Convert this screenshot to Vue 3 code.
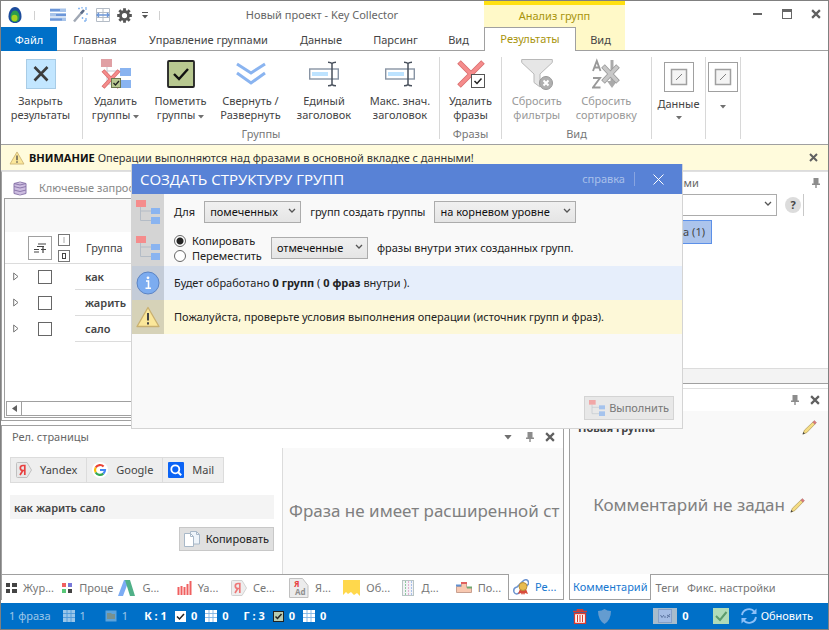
<template>
  <div class="window">
    <svg class="sprite" aria-hidden="true">
      <symbol id="pin" viewBox="0 0 8 10">
        <path d="M1.5 0h5v5.5H8V7H4.7v3H3.3V7H0V5.5h1.5z" fill="#8c8c8c" />
      </symbol>
      <symbol id="cross" viewBox="0 0 9 9">
        <path d="M1 1l7 7M8 1L1 8" stroke="#606060" stroke-width="2" />
      </symbol>
      <symbol id="caret" viewBox="0 0 6 4">
        <path d="M0 0h6L3 3.5z" fill="#707070" />
      </symbol>
      <symbol id="chevron" viewBox="0 0 8 6">
        <path d="M1 1l3 3 3-3" fill="none" stroke="#555" stroke-width="1.3" />
      </symbol>
      <symbol id="tree" viewBox="0 0 24 24">
        <path d="M4.500 7v13.500H15M4.500 11H15" fill="none" stroke="#b4bcc6" />
        <rect width="10" height="7" fill="#f58c8c" />
        <rect x="15" y="8" width="9" height="6" fill="#8ab4f0" />
        <rect x="15" y="17" width="9" height="7" fill="#8ab4f0" />
      </symbol>
      <symbol id="pencil" viewBox="0 0 16 16">
        <path d="M1 15l1.500-4L11.800 2l2.200 2.200L5 13.500z" fill="#f5dc82" stroke="#b09c60" stroke-width=".8" />
        <path d="M11.500 2.300L13.200.6l2.200 2.200L13.700 4.500z" fill="#e07878" stroke="#a87878" stroke-width=".6" />
        <path d="M.6 15.400l.9-2.600 1.700 1.700z" fill="#444" />
      </symbol>
      <symbol id="cells" viewBox="0 0 12 12">
        <rect width="12" height="12" fill="#fff" />
        <path d="M4 0v12M8 0v12M0 3.500h12M0 7.500h12" stroke="#7fb4e4" stroke-width=".9" />
      </symbol>
      <symbol id="warning" viewBox="0 0 24 22">
        <path d="M12 1.500L23 20.500H1z" fill="#fbe79a" stroke="#c9b070" stroke-width="1.300" stroke-linejoin="round" />
        <path d="M12 7v7.500M12 16.300v2.200" stroke="#444" stroke-width="2" />
      </symbol>
      <symbol id="rename" viewBox="0 0 30 26">
        <rect x=".7" y="8" width="28.600" height="10" fill="#fff" stroke="#8894a4" stroke-width="1.400" />
        <rect x="3" y="11" width="16" height="4" fill="#bde3ff" />
        <path d="M23 2v22M19 1.200q3 0 4 1.300q1-1.300 4-1.300M19 24.800q3 0 4-1.300q1 1.300 4 1.300" fill="none" stroke="#48505c" stroke-width="1.500" />
      </symbol>
      <symbol id="slot" viewBox="0 0 30 30">
        <rect x=".5" y=".5" width="29" height="29" fill="#fff" stroke="#a0a0a0" />
        <rect x="7.500" y="7.500" width="15" height="15" fill="#f4f4f4" stroke="#a0a0a0" stroke-width="1.500" />
        <path d="M12 18l6-6" stroke="#808080" />
      </symbol>
      <symbol id="yandex" viewBox="0 0 16 16">
        <path d="M1.500.5h9.500l4.500 7.500-4.500 7.500H1.500a1 1 0 0 1-1-1v-13a1 1 0 0 1 1-1z" fill="#e8e8e8" stroke="#c0c0c0" />
        <path d="M8.800 13V3.500H7Q4.300 3.500 4.300 6T7 8.500h1.500M6.800 8.500L4 13" fill="none" stroke="#e84040" stroke-width="1.700" />
      </symbol>
    </svg>

    <header class="top">
      <div class="title-bar">
        <div class="quick">
          <svg width="14" height="16" viewBox="0 0 14 16">
            <path d="M7 0c4 0 6.500 5 6.500 9.500C13.500 13.500 11 16 7 16S.5 13.500.5 9.500C.5 5 3 0 7 0z" fill="#1c4c9c" />
            <path d="M7 3.500c3 0 4.500 3.500 4.500 6.500s-2 5-4.500 5-4.500-2-4.500-5S4 3.500 7 3.500z" fill="#2c9c4c" />
            <ellipse cx="6.500" cy="11" rx="3" ry="3.300" fill="#a8d020" />
          </svg>
          <i class="tick first"></i>
          <svg width="16" height="14" viewBox="0 0 16 14">
            <path d="M0 .5h16v3.500H0zM0 5h16v3.500H0zM0 9.500h16V13H0z" fill="#a8c4ea" />
            <path d="M0 1h10v2H0zM6 6h10v2H6zM0 10.500h12v2H0z" fill="#6c96d8" />
          </svg>
          <svg width="16" height="16" viewBox="0 0 16 16">
            <path d="M1 14.500L10 4" stroke="#a0a8b4" stroke-width="2.400" />
            <path d="M8 6.500L11 3" stroke="#5c6c88" stroke-width="2.600" />
            <path d="M13 0v3M5 1.500h2M14 6v2M13 11v3M9.500 10v2M11 14h2M9 0v1.500" stroke="#8ab8f0" stroke-width="1.400" />
          </svg>
          <svg width="14" height="14" viewBox="0 0 14 14">
            <path d="M.5.5h13v13H.5zM7 .5v13M.5 4.500h13M.5 9.500h13" fill="#fff" stroke="#b4bcc6" />
            <path d="M1 7h12M3 5L1 7l2 2M11 5l2 2-2 2" fill="none" stroke="#6c96d8" stroke-width="1.300" />
          </svg>
          <svg width="15" height="15" viewBox="-8 -8 16 16">
            <path d="M0-7.800V7.800M-7.800 0H7.800M-5.500-5.500L5.500 5.500M5.500-5.500L-5.500 5.500" stroke="#555" stroke-width="3" />
            <circle r="4.300" fill="#fff" stroke="#555" stroke-width="3" />
          </svg>
          <svg class="more" width="6" height="7" viewBox="0 0 6 7"><path d="M0 .5h6" stroke="#555" /><path d="M0 3h6L3 6.500z" fill="#555" /></svg>
          <i class="tick"></i>
        </div>
        <div class="title">Новый проект - Key Collector</div>
      </div>
      <div class="context-title">Анализ групп</div>
      <div class="controls">
        <button aria-label="Свернуть"><svg width="10" height="10"><path d="M0 5h9" stroke="#666" stroke-width="2" /></svg></button>
        <button aria-label="Развернуть"><svg width="10" height="10"><rect x=".5" y=".5" width="9" height="9" fill="none" stroke="#666" /><path d="M0 1.500h10" stroke="#666" stroke-width="3" /></svg></button>
        <button aria-label="Закрыть"><svg width="10" height="10" viewBox="0 0 9 9"><use href="#cross" /></svg></button>
      </div>
      <nav class="tabs">
        <button class="file">Файл</button>
        <button v-for="t in tabs" :key="t">{{ t }}</button>
      </nav>
      <nav class="context-tabs">
        <button class="active">Результаты</button>
        <button>Вид</button>
      </nav>
      <div class="tabs-rest"></div>
    </header>

    <section class="ribbon">
      <div class="group g-close">
        <div class="actions">
          <button>
            <svg width="30" height="30" viewBox="0 0 30 30">
              <rect x=".5" y=".5" width="29" height="29" fill="#c2e6ff" stroke="#a8cce6" />
              <path d="M8.500 8l13 13.500M21.500 8l-13 13.500" stroke="#3c3c3c" stroke-width="2.600" />
            </svg>
            <span>Закрыть<br />результаты</span>
          </button>
        </div>
      </div>
      <div class="group g-groups">
        <div class="actions">
          <button>
            <svg width="30" height="30" viewBox="0 0 30 30">
              <path d="M6 8v17h13M6 12h13" fill="none" stroke="#c4c8d0" />
              <rect width="11" height="8" fill="#e0a0a4" />
              <rect x="19" y="9" width="11" height="8" fill="#8ab4f0" />
              <rect x="19" y="21" width="11" height="8" fill="#8ab4f0" />
              <path d="M2 11.500l16 17M18 11.500L2 28.500" stroke="#d86c6c" stroke-width="4" />
              <path d="M2.500 12l15 16M17.500 12L2.500 28" stroke="#f58c8c" stroke-width="2.500" />
              <rect x="10.500" y="19.500" width="9" height="9" fill="#b8c890" stroke="#6c7850" />
              <path d="M12.500 24l2 2 3.500-4" fill="none" stroke="#222" stroke-width="1.300" />
            </svg>
            <span>Удалить<br />группы <svg width="6" height="4"><use href="#caret" /></svg></span>
          </button>
          <button>
            <svg width="28" height="28" viewBox="0 0 28 28">
              <rect x="1" y="1" width="26" height="26" rx="1" fill="#b8c890" stroke="#222" stroke-width="1.800" />
              <path d="M7 14l5 5 9-10" fill="none" stroke="#111" stroke-width="2.400" />
            </svg>
            <span>Пометить<br />группы <svg width="6" height="4"><use href="#caret" /></svg></span>
          </button>
          <button>
            <svg width="30" height="24" viewBox="0 0 30 24">
              <path d="M1 2l14 9 14-9M1 11l14 10 14-10" fill="none" stroke="#8ab4f0" stroke-width="3" />
            </svg>
            <span>Свернуть /<br />Развернуть</span>
          </button>
          <button>
            <svg width="30" height="26"><use href="#rename" /></svg>
            <span>Единый<br />заголовок</span>
          </button>
          <button>
            <svg width="30" height="26"><use href="#rename" /></svg>
            <span>Макс. знач.<br />заголовок</span>
          </button>
        </div>
        <div class="caption">Группы</div>
      </div>
      <div class="group g-phrases">
        <div class="actions">
          <button>
            <svg width="28" height="28" viewBox="0 0 28 28">
              <path d="M2 2l24 24M26 2L2 26" stroke="#d86c6c" stroke-width="5" />
              <path d="M2.500 2.500l23 23M25.500 2.500l-23 23" stroke="#f58c8c" stroke-width="3.400" />
              <rect x="14.500" y="14.500" width="13" height="13" fill="#fff" stroke="#555" />
              <path d="M17.500 21l2.500 2.500 4.500-5" fill="none" stroke="#222" stroke-width="1.500" />
            </svg>
            <span>Удалить<br />фразы</span>
          </button>
        </div>
        <div class="caption">Фразы</div>
      </div>
      <div class="group g-view">
        <div class="actions">
          <button disabled>
            <svg width="32" height="32" viewBox="0 0 32 32">
              <path d="M.7 1.500h30.600v3L19 16v13l-6-4.500V16L.7 4.500z" fill="#e6e6e6" stroke="#b8b8b8" />
              <circle cx="25" cy="25" r="6.500" fill="#b0b0b0" stroke="#999" />
              <path d="M22.500 22.500l5 5M27.500 22.500l-5 5" stroke="#fff" stroke-width="2" />
            </svg>
            <span>Сбросить<br />фильтры</span>
          </button>
          <button disabled>
            <svg width="28" height="30" viewBox="0 0 28 30">
              <path d="M1 12L4.800 2 8.500 12M2.500 8.500h4.800M1 19h7L1 28.500h7.500" fill="none" stroke="#999" stroke-width="1.900" />
              <path d="M20 1v22" stroke="#aaa" stroke-width="3" /><path d="M15 22h10l-5 7z" fill="#aaa" />
              <path d="M11 7l15 16M26 7L11 23" stroke="#999" stroke-width="5" />
              <path d="M11.500 7.500l14 15M25.500 7.500l-14 15" stroke="#c8c8c8" stroke-width="3.400" />
            </svg>
            <span>Сбросить<br />сортировку</span>
          </button>
        </div>
        <div class="caption">Вид</div>
      </div>
      <div class="group g-data">
        <button>
          <svg width="30" height="30"><use href="#slot" /></svg>
          <span>Данные</span>
          <svg width="6" height="4"><use href="#caret" /></svg>
        </button>
      </div>
      <div class="group g-last">
        <button aria-label="Ещё">
          <svg width="30" height="30"><use href="#slot" /></svg>
          <svg width="6" height="4"><use href="#caret" /></svg>
        </button>
      </div>
    </section>

    <div class="notice">
      <svg width="16" height="14" viewBox="0 0 24 22"><use href="#warning" /></svg>
      <span class="notice-text"><b>ВНИМАНИЕ</b> Операции выполняются над фразами в основной вкладке с данными!</span>
      <button aria-label="Закрыть"><svg width="9" height="9"><use href="#cross" /></svg></button>
    </div>

    <main class="docks">
      <div class="column">
        <section class="panel keywords">
          <div class="doc-title">
            <svg width="14" height="15" viewBox="0 0 14 15">
              <rect x="1" y="2" width="12" height="11" fill="#cdbde0" />
              <path d="M1 2.500q6-3 12 0q-6 3-12 0M1 5.500q6 3 12 0M1 9q6 3 12 0M1 12.500q6 3 12 0M1 2.500v10M13 2.500v10" fill="none" stroke="#8c78ac" />
            </svg>
            Ключевые запросы
          </div>
          <div class="grid-box">
            <div class="group-area"></div>
            <table>
              <thead>
                <tr>
                  <th colspan="3">
                    <div class="head-cell">
                      <button class="sort" aria-label="Сортировка">
                        <svg width="12" height="10" viewBox="0 0 12 10"><path d="M4 1h8M3 3.500h7M0 6.500h5M0 9h5M7 6.500h5M9 4v6" stroke="#444" stroke-width="1.200" /></svg>
                      </button>
                      <span class="marks">
                        <svg width="12" height="12"><rect x=".5" y=".5" width="11" height="11" fill="#fff" stroke="#777" /><path d="M6 3v6" stroke="#aaa" /></svg>
                        <svg width="12" height="12"><rect x=".5" y=".5" width="11" height="11" fill="#fff" stroke="#777" /><rect x="4.500" y="3.500" width="3" height="5" fill="none" stroke="#444" /></svg>
                      </span>
                      Группа
                    </div>
                  </th>
                </tr>
              </thead>
              <tbody>
                <tr v-for="word in words" :key="word">
                  <td class="expand"><svg width="6" height="9" viewBox="0 0 6 9"><path d="M.7 1l4.300 3.500L.7 8z" fill="#fff" stroke="#777" /></svg></td>
                  <td class="check"><input type="checkbox" :aria-label="word" /></td>
                  <td class="word">{{ word }}</td>
                </tr>
              </tbody>
            </table>
            <div class="scroll">
              <button aria-label="Влево"><svg width="5" height="7"><path d="M5 0v7L0 3.500z" fill="#606060" /></svg></button>
              <div class="track"></div>
            </div>
          </div>
        </section>

        <section class="panel pages">
          <div class="panel-head">
            <h2>Рел. страницы</h2>
            <svg class="drop" width="8" height="5" viewBox="0 0 6 4"><use href="#caret" /></svg>
            <svg width="8" height="10"><use href="#pin" /></svg>
            <button aria-label="Закрыть"><svg width="10" height="10" viewBox="0 0 9 9"><use href="#cross" /></svg></button>
          </div>
          <div class="pages-body">
            <div class="query">
              <div class="engines">
                <button><svg width="16" height="16"><use href="#yandex" /></svg>Yandex</button>
                <button>
                  <svg width="16" height="16" viewBox="0 0 16 16">
                    <circle cx="8" cy="8" r="8" fill="#fff" />
                    <g fill="none" stroke-width="2.200">
                      <path d="M3.700 5.500A5 5 0 0 1 11.600 4.500" stroke="#ea4335" />
                      <path d="M3.700 5.500A5 5 0 0 0 3.700 10.500" stroke="#fbbc05" />
                      <path d="M3.700 10.500A5 5 0 0 0 11.300 11.700" stroke="#34a853" />
                      <path d="M11.300 11.700A5 5 0 0 0 13 8H8" stroke="#4285f4" />
                    </g>
                  </svg>Google
                </button>
                <button>
                  <svg width="16" height="16" viewBox="0 0 16 16">
                    <rect width="16" height="16" rx="1" fill="#0b63f5" />
                    <circle cx="7.300" cy="7.300" r="4" fill="none" stroke="#fff" stroke-width="1.800" />
                    <path d="M10.200 10.200l3 3" stroke="#fff" stroke-width="2" />
                  </svg>Mail
                </button>
              </div>
              <input class="phrase" type="text" value="как жарить сало" aria-label="Фраза" readonly />
              <button class="copy">
                <svg width="16" height="16" viewBox="0 0 16 16">
                  <path d="M6.500.5h6l3 3v9.500h-9z" fill="#eef4fa" stroke="#a8b8c8" />
                  <path d="M.5 2.500h6l3 3v10h-9z" fill="#fff" stroke="#a8b8c8" />
                  <path d="M6.500 2.500v3h3M12.500.5v3h3" fill="none" stroke="#a8b8c8" />
                </svg>Копировать
              </button>
            </div>
            <div class="no-stats">Фраза не имеет расширенной ст</div>
          </div>
          <nav class="dock-tabs">
            <button>
              <svg width="11" height="10"><path d="M0 0h4v4H0zM6 0h5v4H6zM0 6h4v4H0zM6 6h5v4H6z" fill="#444" /></svg>Жур...
            </button>
            <button>
              <svg width="11" height="10"><path d="M0 0h4v4H0z" fill="#f06060" /><path d="M6 0h4v4H6z" fill="#7878d8" /><path d="M0 6h4v4H0z" fill="#58c878" /><path d="M6 6h4v4H6z" fill="#444" /></svg>Проце
            </button>
            <button>
              <svg width="18" height="16" viewBox="0 0 18 16"><path d="M6 0h5L5 16H0z" fill="#7cacf4" /><path d="M7 0h5l5 16h-5z" fill="#50b088" /></svg>G...
            </button>
            <button>
              <svg width="17" height="14"><path d="M3.500 6v8M6.500 5v9M9.500 6v8M12.500 3v11M15.500 0v14" stroke="#f06060" stroke-width="2" /></svg>Ya...
            </button>
            <button>
              <svg width="16" height="16" class="dim"><use href="#yandex" /></svg>Се...
            </button>
            <button>
              <svg width="22" height="20" viewBox="-2 0 22 20"><path d="M.5.500h13l5.500 7v12H.5z" fill="#ececec" stroke="#c0c0c0" /><text x="5" y="9" class="ad-r">Я</text><text x="6" y="17" class="ad-g">Ad</text></svg>Я...
            </button>
            <button>
              <svg width="17" height="16"><path d="M0 0h17v16l-3-3-3 2-3-3-3 2-2-2-3 3z" fill="#ffd84c" /></svg>Об...
            </button>
            <button>
              <svg width="16" height="16"><rect x="2.500" y=".5" width="11" height="15" fill="#f2f2f6" stroke="#b8c4c4" /><path d="M5.500 1v14" stroke="#90c8a0" stroke-dasharray="2 1" /><path d="M8.500 1v14" stroke="#e0b0d0" stroke-dasharray="2 1" /><path d="M11.500 1v14" stroke="#a8c0e8" stroke-dasharray="2 1" /></svg>Д...
            </button>
            <button>
              <svg width="16" height="11"><path d="M.5 4.500h5v-4h5v5h5v5H.5z" fill="#f8c8b0" stroke="#c8a090" /><path d="M0 3.500h5" stroke="#6090d0" stroke-width="2" /><path d="M5 1h6" stroke="#e06060" stroke-width="2" /><path d="M11 5.500h5" stroke="#70a870" stroke-width="2" /></svg>По...
            </button>
            <button class="active">
              <svg width="16" height="16" viewBox="0 0 16 16"><path d="M1 13Q0 9 4 8l5-5q4-4 6-1t-2 5L7 13q-4 4-6 0z" fill="none" stroke="#6c94d0" stroke-width="1.600" /><path d="M7 10l-2 5 3-1 1 2 1-2 1 2 1-2 3 1-2-5z" fill="#d84c3c" /><circle cx="10" cy="7.500" r="4" fill="#e8bc50" stroke="#b89038" /></svg>Ре...
            </button>
          </nav>
        </section>
      </div>

      <div class="column">
        <section class="panel groups">
          <div class="panel-head">
            <h2>Управление группами</h2>
            <svg width="8" height="10"><use href="#pin" /></svg>
          </div>
          <div class="search">
            <span class="picker wide">
              <select aria-label="Поиск групп"><option></option></select>
              <svg width="8" height="6"><use href="#chevron" /></svg>
            </span>
            <button class="help" aria-label="Помощь">?</button>
          </div>
          <div class="tree"><div class="node">Новая группа (1)</div></div>
          <div class="foot"></div>
        </section>

        <section class="panel comment">
          <div class="panel-head">
            <svg width="8" height="10"><use href="#pin" /></svg>
            <button aria-label="Закрыть"><svg width="10" height="10" viewBox="0 0 9 9"><use href="#cross" /></svg></button>
          </div>
          <div class="comment-body">
            <div class="comment-title"><b>Новая группа</b><svg width="15" height="15"><use href="#pencil" /></svg></div>
            <div class="comment-empty">Комментарий не задан <svg width="15" height="15"><use href="#pencil" /></svg></div>
          </div>
          <nav class="note-tabs">
            <button class="active">Комментарий</button>
            <button>Теги</button>
            <button>Фикс. настройки</button>
            <i></i>
          </nav>
        </section>
      </div>
    </main>

    <footer class="status">
      <span class="faded">1 фраза</span>
      <span class="faded s-one"><svg width="12" height="12"><use href="#cells" /></svg>1</span>
      <span class="faded s-two"><svg width="12" height="12"><rect x=".5" y=".5" width="11" height="11" fill="#fff" opacity=".6" /><path d="M2 3h4l1 1h3v5H2z" fill="#c8a868" /></svg>1</span>
      <b>К : 1</b>
      <span class="pair"><svg width="11" height="11"><rect width="11" height="11" fill="#fff" /><path d="M2 5.500l2.500 2.500L9 3" fill="none" stroke="#222" stroke-width="1.500" /></svg><b>0</b></span>
      <span class="pair"><svg width="12" height="12"><use href="#cells" /></svg><b>0</b></span>
      <b class="s-g">Г : 3</b>
      <span class="pair"><svg width="11" height="11"><rect x=".5" y=".5" width="10" height="10" fill="#b8ccb0" stroke="#222" /><path d="M2.500 5.500l2 2L8.500 3" fill="none" stroke="#222" stroke-width="1.500" /></svg><b>0</b></span>
      <span class="pair"><svg width="12" height="12"><use href="#cells" /></svg><b>0</b></span>
      <span class="spacer"></span>
      <svg width="14" height="15" viewBox="0 0 14 15"><path d="M0 2.500h14M4.500 2V.7h5V2" fill="none" stroke="#d83c30" stroke-width="1.500" /><path d="M1.500 4.500h11v9.800h-11z" fill="#fff" stroke="#d83c30" stroke-width="1.300" /><path d="M4.500 6v7M7 6v7M9.500 6v7" stroke="#d83c30" stroke-width="1.100" /></svg>
      <svg class="shield" width="13" height="15"><path d="M6.500 0Q9 2 13 2q0 9-6.500 13Q0 11 0 2q4 0 6.500-2z" fill="#649cd0" /></svg>
      <span class="badge"><svg width="24" height="16"><rect width="24" height="16" fill="#a8bccc" /><rect x="5.500" y="1.500" width="13" height="13" fill="#a4bce4" stroke="#6884b4" stroke-dasharray="1 1" /><path d="M7.500 7l1.500 2.500 2-2.500M11 9h2M14 10l3-4M14 7l3 2" fill="none" stroke="#5c74a0" /></svg><b>0</b></span>
      <svg class="ok" width="16" height="16"><rect width="16" height="16" fill="#b0dcb8" /><path d="M3 8l4 4 6.500-8" fill="none" stroke="#5c9c6c" stroke-width="2" /></svg>
      <button class="refresh">
        <svg width="16" height="16" viewBox="0 0 16 16"><path d="M1 7a7 7 0 0 1 12.500-3M15 9a7 7 0 0 1-12.500 3" fill="none" stroke="#8cc0f8" stroke-width="1.900" /><path d="M15.500.5V6H10zM.5 15.500V10H6z" fill="#8cc0f8" /></svg>
        Обновить
      </button>
    </footer>

    <div class="dialog" role="dialog" aria-labelledby="dialog-title">
      <div class="dialog-head">
        <h1 id="dialog-title">СОЗДАТЬ СТРУКТУРУ ГРУПП</h1>
        <a href="#">справка</a>
        <button aria-label="Закрыть"><svg width="11" height="11"><path d="M.5.5l10 10M10.500.5l-10 10" stroke="#fff" /></svg></button>
      </div>
      <div class="row">
        <div class="side"><svg width="24" height="24"><use href="#tree" /></svg></div>
        <label for="source">Для</label>
        <span class="picker small">
          <select id="source" v-model="source"><option>помеченных</option><option>всех</option></select>
          <svg width="8" height="6"><use href="#chevron" /></svg>
        </span>
        <label for="level">групп создать группы</label>
        <span class="picker level">
          <select id="level" v-model="level"><option>на корневом уровне</option><option>в текущей группе</option></select>
          <svg width="8" height="6"><use href="#chevron" /></svg>
        </span>
      </div>
      <div class="row">
        <div class="side"><svg width="24" height="24"><use href="#tree" /></svg></div>
        <div class="radios">
          <label><input v-model="mode" type="radio" value="copy" />Копировать</label>
          <label><input v-model="mode" type="radio" value="move" />Переместить</label>
        </div>
        <span class="picker small">
          <select id="phrases" v-model="phrases"><option>отмеченные</option><option>все</option></select>
          <svg width="8" height="6"><use href="#chevron" /></svg>
        </span>
        <label for="phrases">фразы внутри этих созданных групп.</label>
      </div>
      <div class="row info">
        <div class="side"><svg width="24" height="24" viewBox="0 0 24 24"><circle cx="12" cy="12" r="11" fill="#7cacf0" stroke="#5c84c4" /><path d="M10 10h2.500v7M9.500 17.300h5.500" fill="none" stroke="#fff" stroke-width="1.600" /><circle cx="12" cy="6.800" r="1.400" fill="#fff" /></svg></div>
        <p>Будет обработано <b>0 групп</b> ( <b>0 фраз</b> внутри ).</p>
      </div>
      <div class="row warn">
        <div class="side"><svg width="24" height="22"><use href="#warning" /></svg></div>
        <p>Пожалуйста, проверьте условия выполнения операции (источник групп и фраз).</p>
      </div>
      <div class="dialog-foot">
        <button disabled><svg width="16" height="16" viewBox="0 0 24 24"><use href="#tree" /></svg>Выполнить</button>
      </div>
    </div>
  </div>
</template>

<script setup>
import { ref } from 'vue';

const tabs = ['Главная', 'Управление группами', 'Данные', 'Парсинг', 'Вид'];
const words = ['как', 'жарить', 'сало'];

const source = ref('помеченных');
const level = ref('на корневом уровне');
const phrases = ref('отмеченные');
const mode = ref('copy');
</script>

<style>
body {
  margin: 0;
}
</style>

<style scoped>
.window {
  position: relative;
  display: flex;
  flex-direction: column;
  box-sizing: border-box;
  min-height: 100vh;
  border: 1px solid #808080;
  background: #fff;
  color: #444;
  font: 11px/16px "Noto Sans", "Open Sans", sans-serif;
}

.window * {
  box-sizing: border-box;
}

.sprite {
  position: absolute;
  width: 0;
  height: 0;
}

svg {
  flex: none;
}

button {
  display: inline-flex;
  align-items: center;
  padding: 0;
  border: 0;
  background: none;
  color: inherit;
  font: inherit;
  white-space: nowrap;
}

/* title bar and tabs */
.top {
  display: grid;
  grid-template-columns: 483px 141px minmax(0, 1fr);
  grid-template-rows: 26px 24px;
}

.title-bar,
.quick {
  display: flex;
  align-items: center;
}

.title-bar {
  padding-top: 2px;
}

.quick {
  gap: 7px;
  padding-left: 7px;
}

.tick {
  width: 1px;
  height: 9px;
  background: #d0d0d0;
}

.tick.first {
  margin: 0 8px 0 5px;
}

.more {
  margin: 0 4px 0 3px;
}

.title {
  flex: 1;
  color: #666;
  text-align: center;
}

.context-title {
  border-top: 4px solid #ffe010;
  background: #fff9c8;
  color: #a8940c;
  line-height: 22px;
  text-align: center;
}

.controls {
  display: flex;
  justify-content: flex-end;
  align-items: center;
  gap: 19px;
  padding-right: 7px;
}

.tabs,
.context-tabs {
  display: grid;
  grid-template-columns: 56px 76px 151px 74px 75px 51px;
}

.tabs button,
.context-tabs button {
  justify-content: center;
  padding-top: 2px;
  border-bottom: 1px solid #a0a0a0;
}

.tabs .file {
  border-color: #0070c8;
  background: #0070c8;
  color: #fff;
}

.context-tabs {
  grid-template-columns: 92px 49px;
  background: #fff9c8;
}

.context-tabs .active {
  padding: 0 0 1px;
  border: 1px solid #a0a0a0;
  border-bottom: 0;
  background: #fff;
  color: #a8940c;
}

.tabs-rest {
  border-bottom: 1px solid #a0a0a0;
}

/* ribbon */
.ribbon {
  display: flex;
  height: 94px;
  padding: 6px 0 5px;
  border-bottom: 1px solid #a0a0a0;
}

.group {
  display: flex;
  flex-direction: column;
  border-right: 1px solid #d8d8d8;
}

.actions {
  display: flex;
  flex: 1;
}

.actions button {
  flex-direction: column;
  flex: 1;
  line-height: 14px;
}

.actions button > svg {
  height: 34px;
}

.actions span {
  padding-top: 3px;
}

.actions button:disabled {
  color: #999;
}

.caption {
  color: #777;
  line-height: 10px;
  text-align: center;
}

.g-close {
  width: 82px;
}

.g-close .actions {
  padding-right: 2px;
}

.g-groups {
  width: 357px;
}

.g-groups .actions {
  display: grid;
  grid-template-columns: 65px 65px 75px 72px 80px;
}

.g-phrases {
  width: 62px;
}

.g-view {
  width: 150px;
}

.g-view .actions {
  padding-right: 10px;
}

.g-data,
.g-last {
  width: 54px;
  align-items: center;
}

.g-last {
  width: 35px;
}

.g-data button,
.g-last button {
  flex-direction: column;
  gap: 4px;
  padding-top: 5px;
}

.g-last button {
  gap: 13px;
}

/* warning strip */
.notice {
  display: flex;
  align-items: center;
  gap: 4px;
  height: 26px;
  padding: 0 10px 0 8px;
  border-bottom: 1px solid #dcdcdc;
  background: #fffbdc;
  color: #333;
}

.notice-text {
  flex: 1;
}

.notice b {
  color: #111;
}

/* docked panels */
.docks {
  display: grid;
  flex: 1;
  grid-template-columns: minmax(0, 1fr) 259px;
  gap: 5px;
}

.column {
  display: flex;
  flex-direction: column;
  gap: 4px;
  min-width: 0;
}

.panel {
  display: flex;
  flex-direction: column;
  min-width: 0;
  border: 1px solid #a0a0a0;
  border-top-color: #e0e0e0;
}

.panel-head {
  display: flex;
  align-items: center;
  justify-content: flex-end;
  gap: 11px;
  height: 22px;
  padding: 0 8px 0 10px;
}

.panel-head h2 {
  flex: 1;
  margin: 0;
  color: #666;
  font-size: 11px;
  font-weight: 400;
}

.drop {
  margin-right: 3px;
}

.keywords {
  flex: 1;
  padding: 0 2px 2px;
}

.doc-title {
  display: flex;
  align-items: center;
  gap: 12px;
  height: 26px;
  padding: 6px 9px 0;
  color: #888;
}

.grid-box {
  display: flex;
  flex: 1;
  flex-direction: column;
  border: 1px solid #a0a0a0;
}

.group-area {
  height: 33px;
  background: #f8f8f8;
}

table {
  border-collapse: collapse;
}

th {
  padding: 0;
  border-bottom: 1px solid #dcdcdc;
  font-weight: 400;
}

.head-cell {
  display: flex;
  align-items: center;
  height: 31px;
  padding-left: 23px;
}

.sort {
  justify-content: center;
  width: 24px;
  height: 24px;
  border: 1px solid #a0a0a0;
}

.marks {
  display: grid;
  gap: 4px;
  margin: 0 16px 0 6px;
}

.expand {
  width: 22px;
  padding: 0 0 0 8px;
}

.check {
  width: 48px;
  padding: 0 0 0 11px;
}

.check input {
  display: block;
  width: 14px;
  height: 14px;
  margin: 0;
  border: 1px solid #666;
  background: #fff;
  appearance: none;
}

.word {
  height: 26px;
  padding: 0 10px;
  border-bottom: 1px solid #dcdcdc;
  font-weight: 600;
}

.scroll {
  display: flex;
  height: 15px;
  margin: auto 1px 1px;
  border: 1px solid #a0a0a0;
}

.scroll button {
  justify-content: center;
  width: 15px;
  border-right: 1px solid #a0a0a0;
}

.track {
  flex: 1;
}

.pages {
  border-top-color: #a0a0a0;
  border-bottom: 0;
}

.pages-body {
  display: grid;
  grid-template-columns: 280px minmax(0, 1fr);
  height: 126px;
}

.query {
  display: flex;
  flex-direction: column;
  padding: 9px 8px 0;
}

.engines {
  display: flex;
  align-self: flex-start;
  border: 1px solid #dcdcdc;
  background: #eeeeee;
}

.engines button {
  gap: 8px;
  height: 24px;
  padding: 0 9px 0 5px;
}

.engines button + button {
  border-left: 1px solid #dcdcdc;
}

.phrase {
  width: 100%;
  height: 24px;
  margin: 12px 0 8px;
  padding: 0 4px;
  border: 0;
  background: #f4f4f4;
  color: #444;
  font: inherit;
  font-weight: 600;
}

.copy {
  align-self: flex-end;
  gap: 6px;
  height: 24px;
  padding: 0 4px;
  border: 1px solid #c8c8c8;
  background: #e0e0e0;
  color: #222;
}

.no-stats {
  padding-left: 6px;
  border-left: 1px solid #dcdcdc;
  background: #f9f9f9;
  color: #808080;
  font-size: 17px;
  line-height: 126px;
  white-space: nowrap;
}

.dock-tabs {
  display: grid;
  grid-template-columns: repeat(9, minmax(0, 1fr)) 55px;
  height: 26px;
}

.dock-tabs button {
  gap: 6px;
  padding: 0 4px;
  border-top: 1px solid #a0a0a0;
  color: #777;
}

.dock-tabs .active {
  border: 1px solid #a0a0a0;
  border-width: 0 0 1px 1px;
  color: #1878d0;
}

.dim {
  opacity: 0.7;
}

.ad-r {
  fill: #e84040;
  font-size: 8px;
  font-weight: 700;
}

.ad-g {
  fill: #909090;
  font-size: 8px;
  font-weight: 700;
}

.groups {
  flex: 1;
  border-right: 0;
}

.search {
  display: flex;
  gap: 8px;
  margin-right: 24px;
  padding: 0 2px 0 8px;
  border-right: 1px solid #c8c8c8;
}

.picker {
  position: relative;
  display: flex;
}

.picker select {
  width: 100%;
  height: 22px;
  padding: 0 5px;
  border: 1px solid #acacac;
  border-radius: 0;
  background: linear-gradient(#f0f0f0, #e5e5e5);
  color: #111;
  font: inherit;
  appearance: none;
}

.picker svg {
  position: absolute;
  top: 7px;
  right: 5px;
  pointer-events: none;
}

.wide {
  flex: 1;
}

.wide select {
  background: #fff;
}

.help {
  justify-content: center;
  width: 16px;
  height: 16px;
  margin-top: 3px;
  border-radius: 50%;
  background: #dcdcdc;
  font-weight: 700;
}

.tree {
  flex: 1;
  padding: 4px 8px;
}

.node {
  width: 134px;
  padding: 3px 6px;
  border: 1px solid #5c90e8;
  background: #acc4ec;
  text-align: right;
}

.foot {
  height: 15px;
  border-top: 1px solid #dcdcdc;
  background: #f3f3f3;
}

.comment {
  border-right: 0;
  border-bottom: 0;
}

.comment-body {
  display: flex;
  flex-direction: column;
  height: 163px;
  background: #f9f9f9;
}

.comment-title {
  display: flex;
  justify-content: space-between;
  padding: 9px 11px 0 8px;
}

.comment-empty {
  display: flex;
  flex: 1;
  align-items: center;
  justify-content: center;
  gap: 5px;
  color: #808080;
  font-size: 17px;
}

.note-tabs {
  display: flex;
  height: 26px;
}

.note-tabs button,
.note-tabs i {
  padding: 0 4px;
  border-top: 1px solid #a0a0a0;
  color: #777;
}

.note-tabs i {
  flex: 1;
}

.note-tabs .active {
  padding: 0 3px;
  border: 1px solid #a0a0a0;
  border-width: 0 1px 1px 0;
  color: #1878d0;
}

/* status bar */
.status {
  display: flex;
  align-items: center;
  height: 26px;
  margin-top: 3px;
  padding: 0 15px 0 8px;
  background: #0070c8;
  color: #fff;
}

.status span {
  display: flex;
  align-items: center;
  gap: 5px;
}

.status .faded {
  opacity: 0.6;
}

.s-one {
  margin: 0 19px 0 12px;
}

.s-two {
  margin-right: 16px;
}

.pair {
  margin-left: 8px;
}

.s-g {
  margin-left: 15px;
}

.spacer {
  flex: 1;
}

.shield {
  margin: 0 42px 0 11px;
}

.ok {
  margin: 0 12px 0 24px;
}

.refresh {
  gap: 4px;
}

/* dialog */
.dialog {
  position: absolute;
  top: 163px;
  left: 130px;
  width: 552px;
  padding-bottom: 8px;
  border: 1px solid #d4d4d4;
  border-top: 0;
  background: #f9f9f9;
  color: #222;
}

.dialog-head {
  display: flex;
  align-items: center;
  height: 30px;
  padding: 0 18px 0 8px;
  background: #5882d6;
  color: #fff;
}

.dialog-head h1 {
  flex: 1;
  margin: 0;
  font: 400 15px/20px "Open Sans", "Noto Sans", sans-serif;
}

.dialog-head a {
  padding-right: 9px;
  border-right: 1px solid #88a4e0;
  color: #a9c0ea;
  line-height: 14px;
  text-decoration: none;
}

.dialog-head button {
  margin-left: 18px;
}

.row {
  display: flex;
  align-items: center;
  gap: 9px;
  height: 36px;
}

.side {
  display: flex;
  align-items: center;
  align-self: stretch;
  justify-content: center;
  width: 32px;
  margin-right: 1px;
  background: #d4d4d4;
}

.small {
  width: 97px;
}

.level {
  width: 142px;
}

.radios label {
  display: flex;
  align-items: center;
  gap: 6px;
  line-height: 15px;
}

.radios input {
  width: 12px;
  height: 12px;
  margin: 0;
  border: 1px solid #666;
  border-radius: 50%;
  background: #fff;
  appearance: none;
}

.radios input:checked {
  background: radial-gradient(#222 3px, #fff 4px);
}

.row p {
  margin: 0;
}

.info,
.warn {
  height: 34px;
  background: #e6eefb;
}

.warn {
  background: #fdf8d8;
}

.info .side {
  background: #c4ccd8;
}

.warn .side {
  background: #d6d2b8;
}

.dialog-foot {
  display: flex;
  justify-content: flex-end;
  padding: 62px 8px 0;
}

.dialog-foot button {
  gap: 4px;
  height: 24px;
  padding: 0 4px;
  border: 1px solid #d4d4d4;
  background: #e8e8e8;
  color: #777;
}

.dialog-foot svg {
  opacity: 0.7;
}
</style>
